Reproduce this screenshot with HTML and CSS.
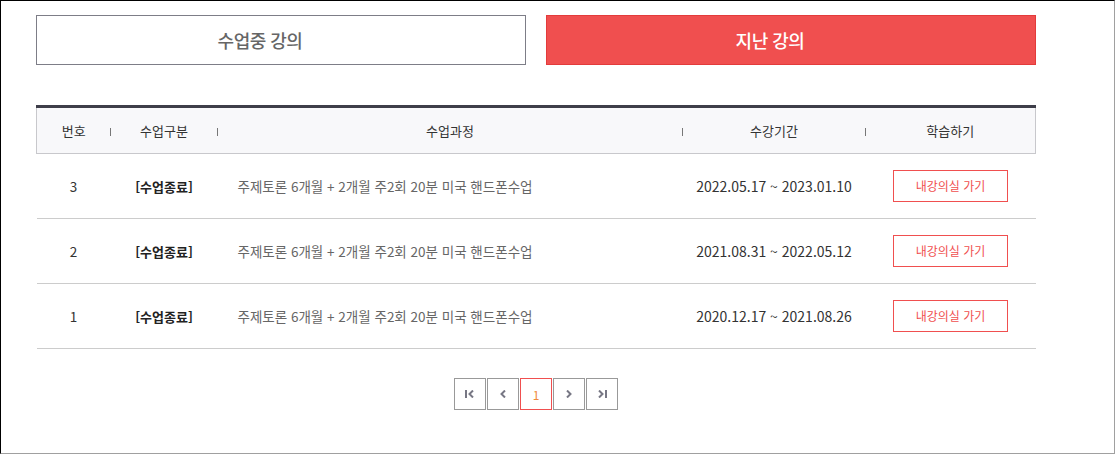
FILE: index.html
```html
<!DOCTYPE html>
<html lang="ko">
  <head>
    <meta charset="UTF-8" />
    <title>지난 강의</title>
    <link rel="stylesheet" href="styles.css">
  </head>
  <body>
    <div class="wrap">
      <div class="tabs">
        <a class="tab" href="#">수업중 강의</a>
        <a class="tab on" href="#">지난 강의</a>
      </div>

      <table class="list">
        <colgroup>
          <col class="c-no" />
          <col class="c-type" />
          <col class="c-title" />
          <col class="c-date" />
          <col class="c-go" />
        </colgroup>
        <thead>
          <tr>
            <th>번호</th>
            <th>수업구분</th>
            <th>수업과정</th>
            <th>수강기간</th>
            <th>학습하기</th>
          </tr>
        </thead>
        <tbody>
          <tr>
            <td>3</td>
            <td class="type">[수업종료]</td>
            <td class="title">주제토론 6개월 + 2개월 주2회 20분 미국 핸드폰수업</td>
            <td class="date">2022.05.17 ~ 2023.01.10</td>
            <td><a class="btn-room" href="#">내강의실 가기</a></td>
          </tr>
          <tr>
            <td>2</td>
            <td class="type">[수업종료]</td>
            <td class="title">주제토론 6개월 + 2개월 주2회 20분 미국 핸드폰수업</td>
            <td class="date">2021.08.31 ~ 2022.05.12</td>
            <td><a class="btn-room" href="#">내강의실 가기</a></td>
          </tr>
          <tr>
            <td>1</td>
            <td class="type">[수업종료]</td>
            <td class="title">주제토론 6개월 + 2개월 주2회 20분 미국 핸드폰수업</td>
            <td class="date">2020.12.17 ~ 2021.08.26</td>
            <td><a class="btn-room" href="#">내강의실 가기</a></td>
          </tr>
        </tbody>
      </table>

      <div class="paging">
        <a href="#" class="pg" title="처음">
          <svg width="10" height="8" viewBox="0 0 10 8"><path d="M1 0v8" stroke="#777784" stroke-width="2"/><path d="M8 0.5 4.5 4 8 7.5" fill="none" stroke="#777784" stroke-width="2"/></svg>
        </a>
        <a href="#" class="pg" title="이전">
          <svg width="6" height="8" viewBox="0 0 6 8"><path d="M5 0.5 1.5 4 5 7.5" fill="none" stroke="#777784" stroke-width="2"/></svg>
        </a>
        <a href="#" class="pg on">1</a>
        <a href="#" class="pg" title="다음">
          <svg width="6" height="8" viewBox="0 0 6 8"><path d="M1 0.5 4.5 4 1 7.5" fill="none" stroke="#777784" stroke-width="2"/></svg>
        </a>
        <a href="#" class="pg" title="마지막">
          <svg width="10" height="8" viewBox="0 0 10 8"><path d="M2 0.5 5.5 4 2 7.5" fill="none" stroke="#777784" stroke-width="2"/><path d="M9 0v8" stroke="#777784" stroke-width="2"/></svg>
        </a>
      </div>
    </div>
  </body>
</html>
```

FILE: styles.css
```css
* {
  box-sizing: border-box;
}
html,
body {
  height: 100%;
}
body {
  margin: 0;
  font-family: "Noto Sans CJK KR", "Noto Sans", sans-serif;
  color: #333;
  background: #fff;
  border-top: 1px solid #000;
  border-left: 1px solid #000;
  border-right: 1px solid #a0a0a0;
  border-bottom: 1px solid #a0a0a0;
}
a {
  text-decoration: none;
}
.wrap {
  width: 1000px;
  margin-left: 35px;
  padding-top: 14px;
}

/* tabs */
.tabs {
  display: flex;
  gap: 20px;
}
.tab {
  flex: 1;
  height: 50px;
  display: flex;
  align-items: center;
  justify-content: center;
  padding-right: 42px;
  border: 1px solid #7d7d87;
  color: #666;
  font-size: 18px;
  font-weight: 500;
  letter-spacing: -0.5px;
}
.tab.on {
  background: #f04f4f;
  border-color: #e33b3b;
  color: #fff;
}

/* list */
.list {
  width: 999px;
  margin-top: 40px;
  border-collapse: collapse;
  table-layout: fixed;
  font-size: 13px;
}
.c-no { width: 74px; }
.c-type { width: 107px; }
.c-title { width: 465px; }
.c-date { width: 183px; }
.c-go { width: 170px; }
.list thead tr {
  border-top: 3px solid #3e3e49;
}
.list th {
  position: relative;
  height: 47px;
  padding: 0;
  background: #f8f8fa;
  border-bottom: 1px solid #c8c8cc;
  font-weight: 400;
  color: #333;
  font-size: 13px;
}
.list th:first-child {
  border-left: 1px solid #c8c8cc;
}
.list th:last-child {
  border-right: 1px solid #c8c8cc;
}
.list th + th::before {
  content: "";
  position: absolute;
  left: -1px;
  top: 20px;
  width: 1px;
  height: 8px;
  background: #777;
}
.list td {
  height: 65px;
  padding: 0;
  text-align: center;
  border-bottom: 1px solid #ccc;
  font-size: 13.5px;
  color: #333;
}
.list td.type {
  font-weight: 700;
  color: #222;
  font-size: 13px;
}
.list td.title {
  text-align: left;
  padding-left: 20px;
  color: #666;
}
.list td.date {
  font-size: 14px;
  color: #333;
}
.btn-room {
  display: inline-block;
  width: 115px;
  height: 32px;
  line-height: 30px;
  border: 1px solid #f04f4f;
  color: #f04f4f;
  font-size: 12px;
}

/* paging */
.paging {
  display: flex;
  justify-content: center;
  gap: 1px;
  margin-top: 29px;
}
.pg {
  width: 32px;
  height: 32px;
  display: flex;
  align-items: center;
  justify-content: center;
  border: 1px solid #999;
  color: #777;
  font-size: 12px;
}
.pg.on {
  border-color: #f04f4f;
  color: #f08a3c;
}
```
